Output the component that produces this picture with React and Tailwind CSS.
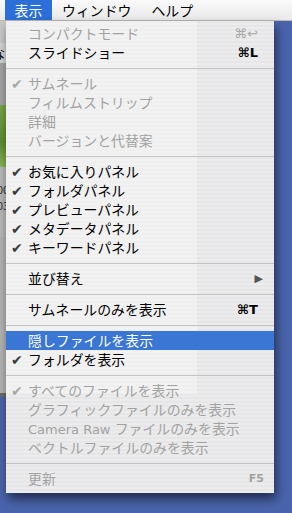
import React from "react";

const items = [
  { t: "item", label: "コンパクトモード", disabled: true, sc: "⌘↩" },
  { t: "item", label: "スライドショー", sc: "⌘L" },
  { t: "sep" },
  { t: "item", label: "サムネール", disabled: true, check: true },
  { t: "item", label: "フィルムストリップ", disabled: true },
  { t: "item", label: "詳細", disabled: true },
  { t: "item", label: "バージョンと代替案", disabled: true },
  { t: "sep" },
  { t: "item", label: "お気に入りパネル", check: true },
  { t: "item", label: "フォルダパネル", check: true },
  { t: "item", label: "プレビューパネル", check: true },
  { t: "item", label: "メタデータパネル", check: true },
  { t: "item", label: "キーワードパネル", check: true },
  { t: "sep" },
  { t: "item", label: "並び替え", arrow: true },
  { t: "sep" },
  { t: "item", label: "サムネールのみを表示", sc: "⌘T" },
  { t: "sep" },
  { t: "item", label: "隠しファイルを表示", hl: true },
  { t: "item", label: "フォルダを表示", check: true },
  { t: "sep" },
  { t: "item", label: "すべてのファイルを表示", disabled: true, check: true },
  { t: "item", label: "グラフィックファイルのみを表示", disabled: true },
  { t: "item", label: "camera", disabled: true },
  { t: "item", label: "ベクトルファイルのみを表示", disabled: true },
  { t: "sep" },
  { t: "item", label: "更新", disabled: true, f5: true },
];

function Row({ it }) {
  const color = it.hl
    ? "text-white"
    : it.disabled
    ? "text-[#a2a2a2]"
    : "text-black";
  return (
    <div
      className={`h-[19px] flex items-center relative ${
        it.hl ? "bg-[#3a76d4]" : ""
      } ${color}`}
    >
      <span
        className={`w-[22px] pl-[5px] text-[14px] leading-none font-['DejaVu_Sans',sans-serif] ${
          it.disabled ? "text-[#a8a8a8]" : "text-[#3a3a3a]"
        }`}
      >
        {it.check ? "✔" : ""}
      </span>
      <span className="flex-1 text-[13.9px] leading-none whitespace-nowrap">
        {it.label === "camera" ? (
          <>
            <span className="font-['DejaVu_Sans',sans-serif] text-[13px]">
              Camera Raw{" "}
            </span>
            ファイルのみを表示
          </>
        ) : (
          it.label
        )}
      </span>
      {it.sc && (
        <span
          className={`pr-[16px] text-[13px] leading-none font-['DejaVu_Sans',sans-serif] ${
            it.disabled ? "text-[#a8a8a8]" : "text-black font-bold"
          }`}
        >
          {it.sc}
        </span>
      )}
      {it.arrow && (
        <span className="pr-[11px] text-[11px] leading-none text-[#555] font-['DejaVu_Sans',sans-serif]">
          ▶
        </span>
      )}
      {it.f5 && (
        <span className="pr-[10px] text-[11px] font-bold leading-none text-[#a0a0a0] font-['DejaVu_Sans',sans-serif]">
          F5
        </span>
      )}
    </div>
  );
}

export default function App() {
  return (
    <div className="w-[292px] h-[513px] relative overflow-hidden bg-[#4a64ac] font-['Noto_Sans_CJK_JP',sans-serif]">
      {/* menubar */}
      <div className="h-[21px] flex items-stretch bg-[linear-gradient(#fafafa,#e9e9e9)] border-b border-[#b8b8b8] text-[13.9px] text-black">
        <div className="ml-[5px] w-[47px] bg-[#2c6fd8] text-white flex items-center justify-center">
          表示
        </div>
        <div className="ml-[10px] flex items-center">ウィンドウ</div>
        <div className="ml-[20px] flex items-center">ヘルプ</div>
      </div>
      <div className="flex">
        {/* app window sliver */}
        <div className="w-[6px] flex flex-col">
          <div className="h-[22px] bg-[#c9c9c9]" />
          <div className="h-[20px] bg-[#d4d4d4] text-[13px] leading-[20px] text-black overflow-hidden whitespace-nowrap">
            <span className="-ml-[8px] inline-block">な</span>
          </div>
          <div className="h-[42px] bg-[#a4a4a4]" />
          <div className="h-[62px] bg-[linear-gradient(#7aa54a,#5c8e33_60%,#8ab35a)]" />
          <div className="h-[70px] bg-[#b9b9b9] text-[11px] leading-[16px] text-[#333] overflow-hidden pt-[14px]">
            <div className="-ml-[3px]">00</div>
            <div className="-ml-[3px]">03</div>
          </div>
          <div className="h-[156px] bg-[#b4b4b4]" />
          <div className="h-[4px] bg-[#6b6b6b]" />
        </div>
        {/* menu */}
        <div className="relative w-[268px] h-[472px] bg-[repeating-linear-gradient(0deg,#ececec_0px,#ececec_2px,#e6e6e8_2px,#e6e6e8_4px)] shadow-[2px_6px_10px_rgba(0,0,0,0.55)]">
          <div className="absolute left-0 top-0 w-[191px] h-[373px] bg-white/35" />
          <div className="relative pt-[3px]">
            {items.map((it, i) =>
              it.t === "sep" ? (
                <div key={i} className="h-[12px] flex items-center">
                  <div className="w-full h-px bg-[#c4c4c4]" />
                </div>
              ) : (
                <Row key={i} it={it} />
              )
            )}
          </div>
        </div>
      </div>
    </div>
  );
}
